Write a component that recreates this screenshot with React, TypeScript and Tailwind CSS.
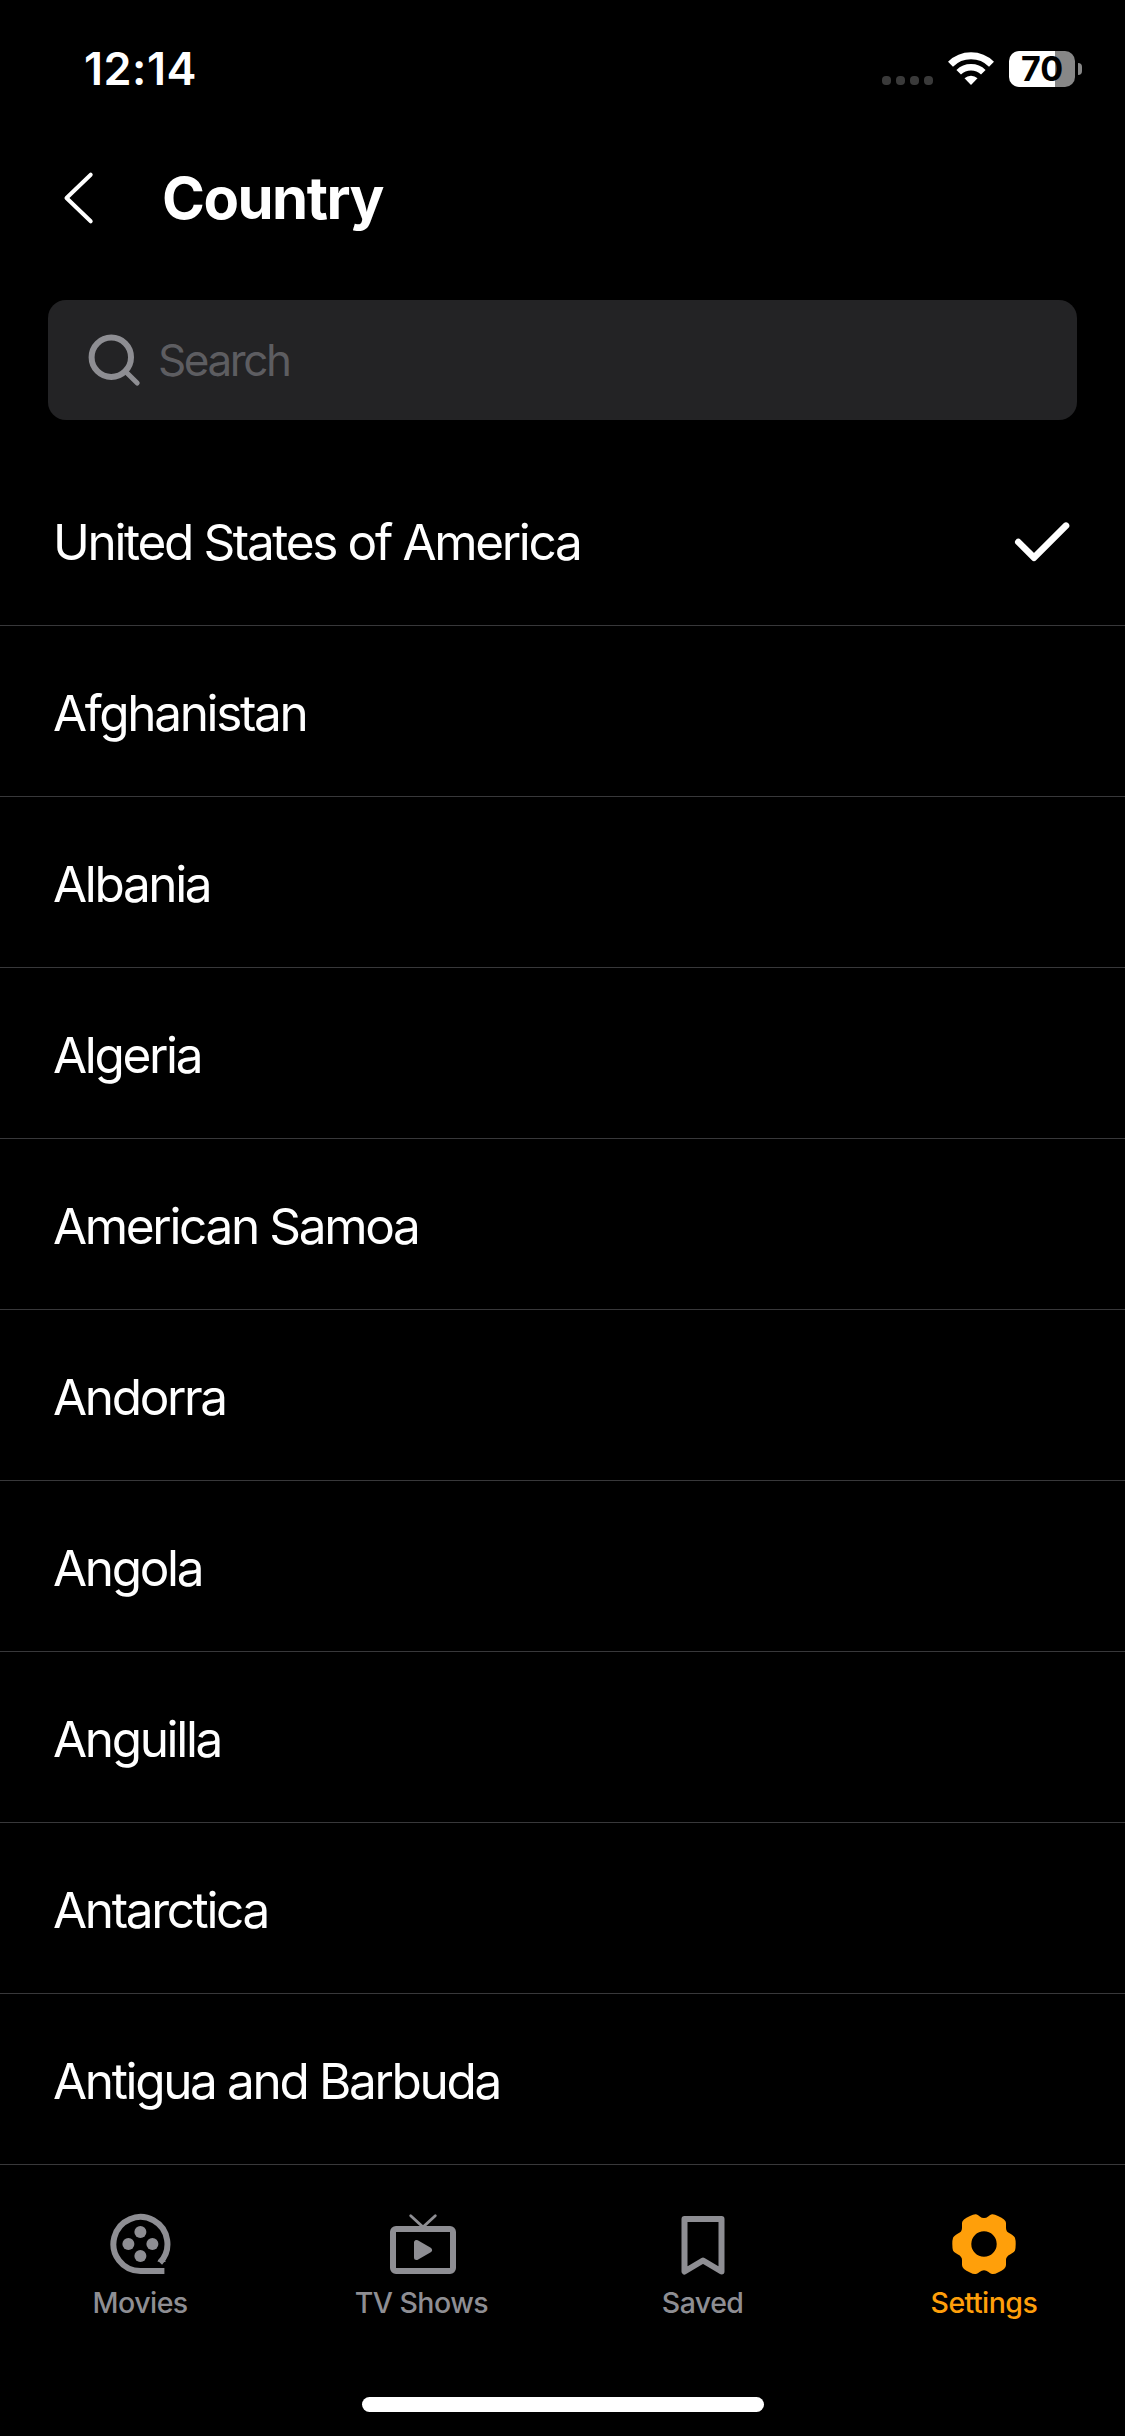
import React from 'react';

// Rows of the country list, the first one is the current choice
const countries: string[] = [
  'United States of America',
  'Afghanistan',
  'Albania',
  'Algeria',
  'American Samoa',
  'Andorra',
  'Angola',
  'Anguilla',
  'Antarctica',
  'Antigua and Barbuda',
];

const MoviesIcon = () => (
  <svg width="66" height="66" viewBox="0.6 0 66 66" fill="none">
    <path d="M57 60H33A27 27 0 1 1 52.5 51.7" stroke="currentColor" strokeWidth="6" />
    <path d="M49.5 51H58.5L56 48Z" fill="currentColor" />
    <circle cx="33" cy="21" r="6" fill="currentColor" />
    <circle cx="21" cy="33" r="6" fill="currentColor" />
    <circle cx="45" cy="33" r="6" fill="currentColor" />
    <circle cx="33" cy="45" r="6" fill="currentColor" />
  </svg>
);

const TvIcon = () => (
  <svg width="68" height="66" viewBox="-2 0 68 66" fill="none">
    <rect x="3" y="18" width="60" height="42" rx="3" stroke="currentColor" strokeWidth="6" />
    <path d="M20.7 4.7L33 16L45.3 4.7" stroke="currentColor" strokeWidth="2.8" strokeLinecap="round" />
    <path
      d="M26.5 31.5V46.5L39.5 39Z"
      fill="currentColor"
      stroke="currentColor"
      strokeWidth="5"
      strokeLinejoin="round"
    />
  </svg>
);

const SavedIcon = () => (
  <svg width="66" height="66" viewBox="0 0 66 66" fill="none">
    <path
      d="M14.5 8H51.5V60.5L33 49.5L14.5 60.5Z"
      stroke="currentColor"
      strokeWidth="6"
      strokeLinejoin="round"
    />
  </svg>
);

const SettingsIcon = () => (
  <svg width="66" height="66" viewBox="0 0 66 66">
    <path
      fillRule="evenodd"
      fill="currentColor"
      d="M25 3.2Q22.5 3 19 5Q11 8.500 11 12V17Q11 21 7 22.500Q2.500 25 2 27Q1.300 29 1.300 33Q1.300 37 2 39.500Q2.500 41 7 43.500Q11 45.500 11 49V54Q11 58 19 61.500Q22.500 63.500 25 63Q27 62.500 28.500 61Q33 57.500 37.500 61Q39 62.500 41 63Q43.500 63.500 47 61.500Q55 58 55 54V49Q55 45.500 59 43.500Q63.500 41 64 39.500Q64.700 37 64.700 33Q64.700 29 64 27Q63.500 25 59 22.500Q55 21 55 17V12Q55 8.500 47 5Q43.500 3 41 3.200Q39 3.700 37.500 5.200Q33 9 28.500 5.200Q27 3.700 25 3.200ZM33 20.300A12.700 12.700 0 1 0 33 45.700A12.700 12.700 0 1 0 33 20.300Z"
    />
  </svg>
);

const tabs = [
  { label: 'Movies', icon: <MoviesIcon />, active: false },
  { label: 'TV Shows', icon: <TvIcon />, active: false },
  { label: 'Saved', icon: <SavedIcon />, active: false },
  { label: 'Settings', icon: <SettingsIcon />, active: true },
];

const StatusBar = () => (
  <div className="flex h-[138px] items-center justify-between pl-[84px] pr-[43px]">
    <span className="-mt-px text-[45px] font-semibold leading-none tracking-[0.5px]">12:14</span>
    <div className="flex items-center">
      <div className="mt-[22px] flex gap-[5px]">
        {[0, 1, 2, 3].map((dot) => (
          <span key={dot} className="h-[9px] w-[9px] rounded-[4px] bg-[#3a3a3a]" />
        ))}
      </div>
      <svg className="ml-[15px]" width="46" height="34" viewBox="0 0 46 34" fill="none">
        <path d="M2.500 12.300A29 29 0 0 1 43.500 12.300" stroke="white" strokeWidth="7" />
        <path d="M10.700 20.300A17.500 17.500 0 0 1 35.300 20.300" stroke="white" strokeWidth="6.500" />
        <path d="M16.500 26.300A9.300 9.300 0 0 1 29.500 26.300L23 33Z" fill="white" />
      </svg>
      <div className="ml-[15px] flex h-9 w-[66px] items-center justify-center rounded-[10px] bg-linear-to-r from-white from-[70%] to-[#878787] to-[70%] text-[34px] font-bold leading-none text-black">
        70
      </div>
      <span className="ml-[3px] h-3 w-1 rounded-r-full bg-[#878787]" />
    </div>
  </div>
);

const Header = () => (
  <div className="flex h-[120px] items-center pl-[63px]">
    <svg width="32" height="54" viewBox="0 0 32 54" fill="none">
      <path
        d="M27.700 3.700L3.500 27L27.700 50.300"
        stroke="white"
        strokeWidth="4"
        strokeLinecap="round"
        strokeLinejoin="round"
      />
    </svg>
    <h1 className="ml-[67px] text-[58px] font-bold leading-none tracking-[-1.5px]">Country</h1>
  </div>
);

const SearchBox = () => (
  <div className="mx-12 mt-[42px] flex h-[120px] items-center rounded-[18px] bg-[#232325] pl-9">
    <svg width="60" height="60" viewBox="0 0 60 60" fill="none" stroke="#8e8e93">
      <circle cx="27.300" cy="27.300" r="19.700" strokeWidth="6" />
      <path d="M41 41L53.200 53" strokeWidth="5" strokeLinecap="round" />
    </svg>
    <span className="ml-[14px] text-[44px] leading-none tracking-[-2.4px] text-[#5d5d61]">Search</span>
  </div>
);

const CountryRow = ({ name, selected }: { name: string; selected: boolean }) => (
  <div className="flex h-[171px] items-center justify-between border-b border-[#38383a] pl-[53px] pr-[54px]">
    <span className="mt-[5px] text-[49.5px] leading-none tracking-[-2.35px]">{name}</span>
    {selected && (
      <svg width="60" height="44" viewBox="0 0 60 44" fill="none">
        <path
          d="M7.300 24L23 39.700L55 7.700"
          stroke="white"
          strokeWidth="6.600"
          strokeLinecap="round"
          strokeLinejoin="round"
        />
      </svg>
    )}
  </div>
);

const TabBar = () => (
  <div className="grid grid-cols-4 pt-[46px]">
    {tabs.map((tab) => (
      <div
        key={tab.label}
        className={`flex flex-col items-center ${tab.active ? 'text-[#ff9f0a]' : 'text-[#8e8e93]'}`}
      >
        {tab.icon}
        <span className="mr-px mt-2 text-[28.5px] font-medium leading-9 tracking-[-0.55px]">{tab.label}</span>
      </div>
    ))}
  </div>
);

export default function App() {
  return (
    <div className="flex h-[2436px] w-[1125px] flex-col overflow-hidden bg-black font-['Inter',sans-serif] text-white">
      <StatusBar />
      <Header />
      <SearchBox />
      <div className="mt-[35px]">
        {countries.map((name, index) => (
          <CountryRow key={name} name={name} selected={index === 0} />
        ))}
      </div>
      <TabBar />
      {/* Home indicator */}
      <div className="mx-auto mb-6 mt-auto h-[15px] w-[402px] rounded-full bg-white" />
    </div>
  );
}
